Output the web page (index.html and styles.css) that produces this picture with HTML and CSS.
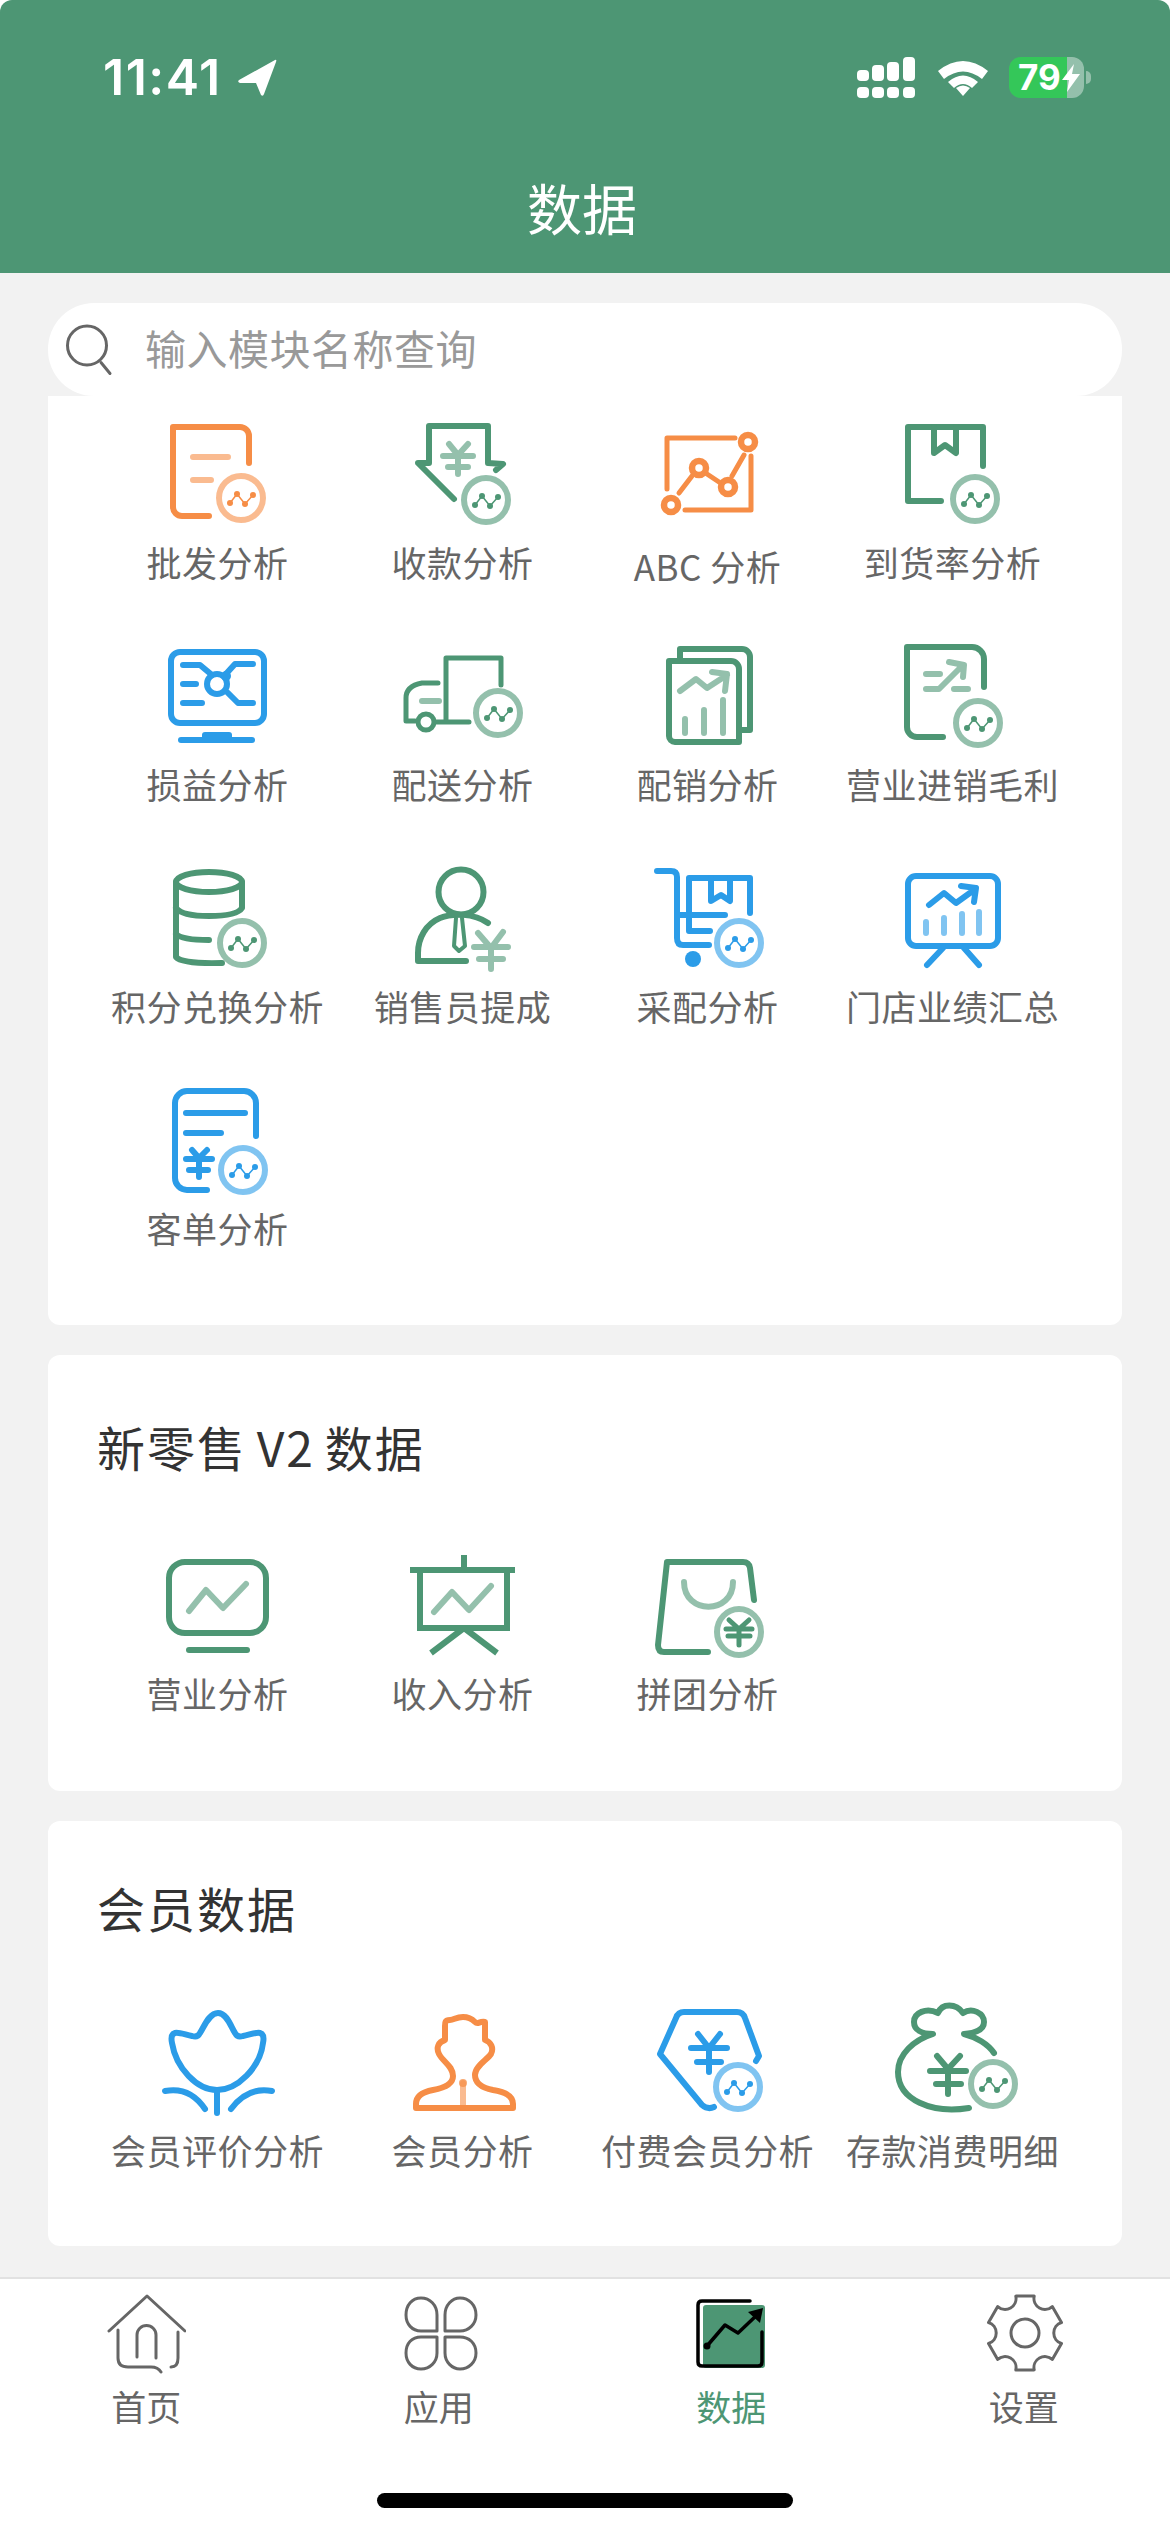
FILE: index.html
```html
<!DOCTYPE html>
<html lang="zh">
<head>
    <meta charset="UTF-8">
    <meta name="viewport" content="width=device-width, initial-scale=1.0">
    <title>数据</title>
    <link rel="stylesheet" href="styles.css">
</head>
<body>
    <header class="header">
        <div class="status-bar">
            <div class="status-time">
                <span>11:41</span>
                <svg class="status-arrow" width="40" height="38" viewBox="0 0 40 38"><path d="M38 1 L2 21 Q0 23 3 24 L19 24 L24 36 Q26 38 27 35 L39 3 Q40 0 38 1Z"/></svg>
            </div>
            <div class="status-right">
                <svg width="58" height="41" viewBox="0 0 58 41" class="status-signal">
                    <rect x="0" y="13" width="12" height="11" rx="4"/><rect x="15" y="8" width="12" height="16" rx="4"/><rect x="30" y="5" width="12" height="19" rx="4"/><rect x="46" y="0" width="12" height="24" rx="4"/>
                    <rect x="0" y="30" width="12" height="11" rx="4"/><rect x="15" y="30" width="12" height="11" rx="4"/><rect x="30" y="30" width="12" height="11" rx="4"/><rect x="46" y="30" width="12" height="11" rx="4"/>
                </svg>
                <svg width="50" height="37" viewBox="0 0 50 37" class="status-wifi">
                    <path d="M0 12 Q25 -8 50 12 L44 20 Q25 5 6 20Z"/><path d="M10 24 Q25 11 40 24 L34 30 Q25 22 16 30Z" transform="translate(0 -1)"/><path d="M18 29 Q25 24 32 29 L25 37Z"/>
                </svg>
                <div class="battery">
                    <div class="battery-body">
                        <span class="battery-num">79</span>
                        <svg width="18" height="28" viewBox="0 0 18 28"><path d="M12 0 L0 16 H7 L5 28 L18 10 H10Z"/></svg>
                    </div>
                    <div class="battery-tip"></div>
                </div>
            </div>
        </div>
        <h1 class="page-title">数据</h1>
    </header>

    <main class="content">
        <div class="search">
            <svg width="48" height="52" viewBox="0 0 48 52"><circle cx="21" cy="21.5" r="19.5"/><path d="M35 38.5 L44 49.5"/></svg>
            <span>输入模块名称查询</span>
        </div>

        <section class="card card-first">
            <div class="grid">
                <div class="item orange">
                    <svg class="icon" viewBox="0 0 120 120">
                        <defs>
                            <symbol id="badge" viewBox="0 0 52 52">
                                <circle class="soft" cx="26" cy="26" r="22"/>
                                <polyline class="thin" points="15,31 22,22 30,32 38,23"/>
                                <circle class="dot" cx="15" cy="31" r="3"/><circle class="dot" cx="22" cy="22" r="3"/><circle class="dot" cx="30" cy="32" r="3"/><circle class="dot" cx="38" cy="23" r="3"/>
                            </symbol>
                        </defs>
                        <path d="M92 49 V22 a9 9 0 0 0 -9 -9 H16 V93 a9 9 0 0 0 9 9 H52"/>
                        <path class="soft" d="M36 43 H71 M36 66 H54"/>
                        <use href="#badge" x="58" y="58" width="52" height="52"/>
                    </svg>
                    <div class="label">批发分析</div>
                </div>
                <div class="item green">
                    <svg class="icon" viewBox="0 0 120 120">
                        <path d="M94 56 L101 50 L86 49 V12 H27 V49 H16 L52 85"/>
                        <path class="soft" d="M47 30 L56 41 L66 30 M56 41 V60 M41 42 H71 M46 53 H66"/>
                        <use href="#badge" x="58" y="60" width="52" height="52"/>
                    </svg>
                    <div class="label">收款分析</div>
                </div>
                <div class="item orange">
                    <svg class="icon" viewBox="0 0 120 120">
                        <path class="mid" d="M20 75 V24 H88 M104 42 V96 H38"/>
                        <circle class="ring" cx="101" cy="28" r="7"/><circle class="ring" cx="52" cy="54" r="7"/><circle class="ring" cx="81" cy="73" r="7"/><circle class="ring" cx="24" cy="91" r="7"/>
                        <path class="mid" d="M45 62 L32 79 M60 60 L72 68 M85 62 L97 41"/>
                    </svg>
                    <div class="label label-low">ABC 分析</div>
                </div>
                <div class="item green">
                    <svg class="icon" viewBox="0 0 120 120">
                        <path d="M91 52 V13 H16 V87 H49"/>
                        <path d="M42 13 V39 L53 31 L64 39 V13"/>
                        <use href="#badge" x="57" y="59" width="52" height="52"/>
                    </svg>
                    <div class="label">到货率分析</div>
                </div>

                <div class="item blue">
                    <svg class="icon" viewBox="0 0 120 120">
                        <rect x="14" y="16" width="93" height="71" rx="9"/>
                        <path d="M24 104 H95"/>
                        <rect class="solid" x="45" y="96" width="30" height="8" rx="3"/>
                        <path d="M26 29 H43 L55 39 M96 28 H78 L68 39 M26 48 H39 M26 67 H45 M96 67 H81 L71 57"/>
                        <circle cx="60" cy="48" r="10"/>
                        <circle class="solid" cx="69" cy="40" r="5"/>
                    </svg>
                    <div class="label">损益分析</div>
                </div>
                <div class="item green">
                    <svg class="icon" viewBox="0 0 120 120">
                        <path class="mid" d="M44 84 V22 H99 V49 M67 86 H33 M36 47 H20 Q4 50 4 62 V85 H13"/>
                        <circle class="mid" cx="24" cy="86" r="8"/>
                        <path class="soft" d="M20 65 H37"/>
                        <use href="#badge" x="70" y="51" width="52" height="52"/>
                    </svg>
                    <div class="label">配送分析</div>
                </div>
                <div class="item green">
                    <svg class="icon" viewBox="0 0 120 120">
                        <path d="M33 25 V13 H95 a8 8 0 0 1 8 8 V94 H92"/>
                        <path d="M22 25 H84 a8 8 0 0 1 8 8 V106 H28 a6 6 0 0 1 -6 -6Z"/>
                        <path class="soft" d="M33 55 L49 43 L60 52 L80 39 M65 36 L80 38 L78 55 M38 83 V97 M57 74 V97 M76 64 V97"/>
                    </svg>
                    <div class="label">配销分析</div>
                </div>
                <div class="item green">
                    <svg class="icon" viewBox="0 0 120 120">
                        <path d="M92 51 V23 a12 12 0 0 0 -12 -12 H15 V91 a10 10 0 0 0 10 10 H51"/>
                        <path class="soft" d="M34 38 H48 M34 53 H47 L71 29 M57 26 L72 29 L71 41 M62 53 H76"/>
                        <use href="#badge" x="60" y="61" width="52" height="52"/>
                    </svg>
                    <div class="label">营业进销毛利</div>
                </div>

                <div class="item green">
                    <svg class="icon" viewBox="0 0 120 120">
                        <ellipse cx="52" cy="24" rx="33" ry="10"/>
                        <path d="M19 24 V99 Q25 106 65 105 M85 24 V50 Q80 58 52 58 Q25 58 19 50 M19 76 Q25 82 52 82"/>
                        <use href="#badge" x="59" y="59" width="52" height="52"/>
                    </svg>
                    <div class="label">积分兑换分析</div>
                </div>
                <div class="item green">
                    <svg class="icon" viewBox="0 0 120 120">
                        <circle cx="59" cy="34" r="22.5"/>
                        <path d="M86 65 C72 55 50 55 38 60 C24 66 16 80 16 95 V103 H64"/>
                        <path class="thin-line" d="M54 60 L52 88 L57 93 L63 88 L60 60"/>
                        <path class="soft" d="M76 75 L89 90 L101 74 M89 90 V111 M72 89 H106 M77 101 H101"/>
                    </svg>
                    <div class="label">销售员提成</div>
                </div>
                <div class="item blue">
                    <svg class="icon" viewBox="0 0 120 120">
                        <path d="M10 13 H24 Q30 13 30 19 V80 Q30 87 36 87 H62 M30 57 H78 M42 20 V73 H63 M42 20 H103 V55"/>
                        <path d="M64 20 V43 L74 37 L83 43 V20"/>
                        <circle class="solid" cx="46" cy="101" r="8"/>
                        <use href="#badge" x="66" y="59" width="52" height="52"/>
                    </svg>
                    <div class="label">采配分析</div>
                </div>
                <div class="item blue">
                    <svg class="icon" viewBox="0 0 120 120">
                        <rect x="16" y="18" width="90" height="70" rx="8"/>
                        <path d="M51 90 L35 107 M72 90 L87 107 M37 47 L52 35 L64 45 L82 32 M69 28 L84 30 L82 44"/>
                        <path class="soft" d="M34 64 V75 M52 60 V75 M70 56 V75 M87 54 V75"/>
                    </svg>
                    <div class="label">门店业绩汇总</div>
                </div>

                <div class="item blue">
                    <svg class="icon" viewBox="0 0 120 120">
                        <path d="M99 56 V23 a12 12 0 0 0 -12 -12 H30 a12 12 0 0 0 -12 12 V98 a12 12 0 0 0 12 12 H50"/>
                        <path d="M29 33 H88 M29 53 H64 M35 70 L42 78 L50 70 M42 78 V97 M29 79 H55 M32 90 H51"/>
                        <use href="#badge" x="60" y="64" width="52" height="52"/>
                    </svg>
                    <div class="label">客单分析</div>
                </div>
            </div>
        </section>

        <section class="card card-v2">
            <h2 class="card-title">新零售 V2 数据</h2>
            <div class="grid">
                <div class="item green">
                    <svg class="icon" viewBox="0 0 120 120">
                        <rect x="12" y="17" width="97" height="71" rx="16"/>
                        <path d="M32 105 H90"/>
                        <path class="soft" d="M32 66 L49 45 L66 63 L89 39"/>
                    </svg>
                    <div class="label">营业分析</div>
                </div>
                <div class="item green">
                    <svg class="icon" viewBox="0 0 120 120">
                        <path class="square" d="M62 10 V25 M8 25 H113 M18 25 V83 H105 V25 M62 83 L29 108 M62 83 L95 108"/>
                        <path class="soft" d="M32 67 L50 47 L67 65 L89 41"/>
                    </svg>
                    <div class="label">收入分析</div>
                </div>
                <div class="item green">
                    <svg class="icon" viewBox="0 0 120 120">
                        <path d="M107 55 L103 23 Q102 17 96 17 H20 L11 100 Q11 107 17 107 H61"/>
                        <path class="soft" d="M37 37 C37 70 86 70 86 37"/>
                        <ellipse class="soft" cx="92" cy="87" rx="22" ry="23"/>
                        <path class="mid" d="M82 75 L92 84 L102 75 M92 84 V100 M79 84 H105 M81 91 H103"/>
                    </svg>
                    <div class="label">拼团分析</div>
                </div>
            </div>
        </section>

        <section class="card card-member">
            <h2 class="card-title">会员数据</h2>
            <div class="grid">
                <div class="item blue">
                    <svg class="icon" viewBox="0 0 120 120">
                        <path d="M61 13 C52 13 47 27 43 33 C41 37 38 37 35 36 C29 35 22 32 18 33 C14 34 14 38 15 43 C19 68 40 90 60 90 C80 90 103 68 106 43 C107 38 107 34 103 33 C99 32 92 35 86 36 C83 37 80 37 78 33 C74 27 70 13 61 13Z"/>
                        <path d="M60 90 V113 M8 91 C24 88 38 94 48 109 M115 91 C99 88 85 94 74 109"/>
                    </svg>
                    <div class="label">会员评价分析</div>
                </div>
                <div class="item orange">
                    <svg class="icon" viewBox="0 0 120 120">
                        <path d="M61 17 C54 17 52 20 48 20 C43 20 43 22 43 26 V40 C36 42 34 48 37 54 C41 62 51 66 51 76 C51 84 42 88 31 90 C20 92 14 96 14 104 V108 H111 V104 C111 96 104 92 91 90 C81 88 73 84 73 75 C73 66 85 60 89 54 C92 48 89 42 83 40 V22 C77 21 76 25 73 22 C70 19 66 17 61 17Z"/>
                        <path class="soft" d="M61 83 V108"/>
                        <circle class="solid soft-fill" cx="61" cy="83" r="4"/>
                    </svg>
                    <div class="label">会员分析</div>
                </div>
                <div class="item blue">
                    <svg class="icon" viewBox="0 0 120 120">
                        <path d="M109 61 L112 56 L98 18 Q96 12 90 12 H37 Q31 12 29 18 L13 54 L55 105 Q61 110 67 107"/>
                        <path d="M51 34 L62 48 L73 34 M62 48 V72 M44 48 H80 M50 62 H74"/>
                        <use href="#badge" x="65" y="61" width="52" height="52"/>
                    </svg>
                    <div class="label">付费会员分析</div>
                </div>
                <div class="item green">
                    <svg class="icon" viewBox="0 0 120 120">
                        <path d="M77 108 C40 114 6 100 6 72 C6 54 22 40 41 34 C30 34 22 30 22 22 C22 13 34 7 46 13 C50 3 64 3 71 13 C80 7 92 13 92 22 C92 30 84 33 72 34 C84 37 96 44 102 53"/>
                        <path d="M45 56 L56 69 L68 56 M56 69 V94 M38 71 H74 M44 84 H69"/>
                        <use href="#badge" x="75" y="58" width="52" height="52"/>
                    </svg>
                    <div class="label">存款消费明细</div>
                </div>
            </div>
        </section>
    </main>

    <nav class="tabbar">
        <div class="tabs">
            <div class="tab">
                <svg class="tab-icon" viewBox="0 0 80 80">
                    <path d="M3 37 L41 2 L79 37"/>
                    <path d="M12 36 V64 Q12 73 22 73 H45 Q52 73 55 78 M72 38 V64 Q72 73 65 73 M31 63 V41 a9.5 9.5 0 0 1 19 0 V64"/>
                </svg>
                <span>首页</span>
            </div>
            <div class="tab">
                <svg class="tab-icon" viewBox="0 0 80 80">
                    <path d="M38 37 H22 C13 37 7 30 7 21 C7 11 13 4 22 4 C31 4 38 11 38 21Z"/>
                    <path d="M46 37 H61 C70 37 77 30 77 21 C77 11 70 4 61 4 C53 4 46 11 46 21Z"/>
                    <path d="M38 43 H22 C13 43 7 49 7 59 C7 68 13 75 22 75 C31 75 38 68 38 59Z"/>
                    <path d="M46 43 H61 C70 43 77 49 77 59 C77 68 70 75 61 75 C53 75 46 68 46 59Z"/>
                </svg>
                <span>应用</span>
            </div>
            <div class="tab tab-active">
                <svg class="tab-icon" viewBox="0 0 80 80">
                    <rect class="tab-fill" x="12" y="11" width="62" height="63" rx="3"/>
                    <path class="tab-black" d="M59 7 H11 Q7 7 7 11 V68 Q7 72 11 72 H67 Q71 72 71 68 V38"/>
                    <path class="tab-black" d="M16 52 L34 31 L47 39 L67 20"/>
                    <path class="tab-head" d="M57 18 L72 14 L69 29Z"/>
                    <circle class="tab-head" cx="16" cy="52" r="3.5"/>
                </svg>
                <span>数据</span>
            </div>
            <div class="tab">
                <svg class="tab-icon" viewBox="0 0 80 80">
                    <path d="M31.8 2.1 L50.2 2.1 A11 11 0 0 0 68.3 12.6 L77.5 28.5 A11 11 0 0 0 77.5 49.5 L68.3 65.4 A11 11 0 0 0 50.2 75.9 L31.8 75.9 A11 11 0 0 0 13.7 65.4 L4.5 49.5 A11 11 0 0 0 4.5 28.5 L13.7 12.6 A11 11 0 0 0 31.8 2.1Z"/>
                    <circle cx="41" cy="39" r="14"/>
                </svg>
                <span>设置</span>
            </div>
        </div>
        <div class="home-bar"></div>
    </nav>
</body>
</html>
```

FILE: styles.css
```css
body {
    margin: 0;
    width: 1170px;
    height: 2532px;
    display: flex;
    flex-direction: column;
    overflow: hidden;
    background-color: #fff;
    font-family: "Noto Sans CJK SC", "Noto Sans", sans-serif;
    color: #666;
}

/* 顶部 */
.header {
    height: 273px;
    flex-shrink: 0;
    box-sizing: border-box;
    padding-top: 57px;
    background-color: #4d9674;
    border-radius: 12px 12px 0 0;
    color: #fff;
}

.status-bar {
    display: flex;
    justify-content: space-between;
    align-items: center;
    height: 41px;
    padding: 0 79px 0 103px;
}

.status-time {
    display: flex;
    align-items: center;
    gap: 15px;
    font-family: Inter, "Liberation Sans", sans-serif;
    font-size: 50px;
    font-weight: 600;
    line-height: 41px;
    letter-spacing: 1.5px;
}

.status-arrow,
.status-signal,
.status-wifi {
    fill: #fff;
    display: block;
}

.status-right {
    display: flex;
    align-items: center;
    gap: 23px;
}

.status-wifi {
    margin-right: -2px;
}

.battery {
    display: flex;
    align-items: center;
    gap: 2px;
}

.battery-body {
    width: 75px;
    height: 41px;
    box-sizing: border-box;
    padding-left: 9px;
    display: flex;
    align-items: center;
    gap: 1px;
    border-radius: 12px;
    background: linear-gradient(to right, #34c759 77%, rgba(255, 255, 255, 0.4) 77%);
    fill: #fff;
}

.battery-num {
    font-family: Inter, "Liberation Sans", sans-serif;
    font-size: 35px;
    font-weight: 700;
    line-height: 41px;
}

.battery-tip {
    width: 5px;
    height: 13px;
    border-radius: 0 5px 5px 0;
    background-color: rgba(255, 255, 255, 0.4);
}

.page-title {
    margin: 78px 6px 0 0;
    font-size: 55px;
    font-weight: 400;
    line-height: 60px;
    text-align: center;
}

/* 内容区 */
.content {
    flex: 1;
    box-sizing: border-box;
    padding: 30px 48px 0;
    background-color: #f2f2f2;
}

.search {
    height: 93px;
    display: flex;
    align-items: center;
    gap: 31px;
    padding-left: 18px;
    border-radius: 46px;
    background-color: #fff;
    font-size: 41px;
    letter-spacing: 0.5px;
    color: #999;
}

.search span {
    padding-bottom: 5px;
}

.search svg {
    fill: none;
    stroke: #666;
    stroke-width: 3;
    stroke-linecap: round;
}

.card {
    background-color: #fff;
    border-radius: 12px;
}

.card-first {
    height: 929px;
    box-sizing: border-box;
    padding-top: 18px;
    border-radius: 0 0 12px 12px;
}

.card-v2 {
    height: 436px;
    box-sizing: border-box;
    margin-top: 30px;
    padding-top: 61px;
}

.card-member {
    height: 425px;
    box-sizing: border-box;
    margin-top: 30px;
    padding-top: 56px;
}

.card-title {
    margin: 0 0 69px 49px;
    font-size: 48px;
    font-weight: 400;
    line-height: 60px;
    letter-spacing: 2px;
    word-spacing: -3px;
    color: #333;
}

.card-member .card-title {
    margin-bottom: 63px;
}

.grid {
    display: grid;
    grid-template-columns: repeat(4, 245px);
    grid-auto-rows: 174px;
    row-gap: 48px;
    padding-left: 46px;
}

.item {
    display: flex;
    flex-direction: column;
    align-items: center;
}

.label {
    margin-top: 4px;
    padding-left: 2px;
    font-size: 35px;
    line-height: 48px;
    letter-spacing: 0.5px;
    white-space: nowrap;
    color: #666;
}

.label-low {
    margin-top: 8px;
}

.card-member .label {
    margin-top: 6px;
}

/* 图标 */
.icon {
    width: 120px;
    height: 120px;
    display: block;
    flex-shrink: 0;
    overflow: visible;
    fill: none;
    stroke: currentColor;
    stroke-width: 6;
    stroke-linecap: round;
    stroke-linejoin: round;
}

.orange .icon {
    color: #f68d46;
}

.green .icon {
    color: #4d9674;
}

.blue .icon {
    color: #2b9ce8;
}

.icon .soft {
    opacity: 0.6;
}

.icon .mid {
    stroke-width: 5;
}

.icon .ring {
    stroke-width: 6.5;
}

.icon .thin {
    stroke-width: 1.5;
}

.icon .thin-line {
    stroke-width: 4;
}

.icon .square {
    stroke-linecap: butt;
    stroke-linejoin: miter;
}

.icon .dot,
.icon .solid {
    fill: currentColor;
    stroke: none;
}

.icon .soft-fill {
    opacity: 0.75;
}

/* 底部导航 */
.tabbar {
    height: 255px;
    flex-shrink: 0;
    box-sizing: border-box;
    border-top: 2px solid #e2e2e2;
    background-color: #fff;
}

.tabs {
    display: grid;
    grid-template-columns: repeat(4, 1fr);
    padding-top: 15px;
}

.tab {
    display: flex;
    flex-direction: column;
    align-items: center;
    font-size: 35px;
    line-height: 44px;
    color: #666;
}

.tab-icon {
    width: 80px;
    height: 80px;
    display: block;
    margin-bottom: 10px;
    fill: none;
    stroke: #666;
    stroke-width: 3;
    stroke-linecap: round;
    stroke-linejoin: round;
}

.tab-active {
    color: #4d9674;
}

.tab-active .tab-fill {
    fill: #4d9674;
    stroke: none;
}

.tab-active .tab-black {
    stroke: #000;
    stroke-width: 3.5;
}

.tab-active .tab-head {
    fill: #000;
    stroke: none;
}

.home-bar {
    width: 416px;
    height: 15px;
    margin: 65px auto 0;
    border-radius: 8px;
    background-color: #000;
}
```
